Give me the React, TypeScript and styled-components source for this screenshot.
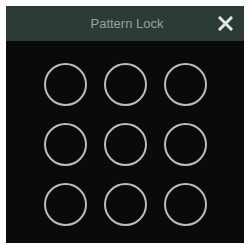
import React from "react";
import styled, { createGlobalStyle } from "styled-components";

const Global = createGlobalStyle`
  html, body { margin: 0; padding: 0; background: #ffffff; }
  body { font-family: "Liberation Sans", Arial, sans-serif; }
`;

const Page = styled.div`
  padding: 6px 4px 3px 6px;
`;

const Panel = styled.div`
  width: 238px;
  height: 237px;
  background: #0a0a0a;
  display: flex;
  flex-direction: column;
`;

const Header = styled.div`
  position: relative;
  height: 35px;
  background: #2d3b36;
  display: flex;
  align-items: center;
  justify-content: center;
`;

const Title = styled.span`
  color: #97a29d;
  font-size: 13px;
  margin-left: 4px;
`;

const Close = styled.button`
  position: absolute;
  right: 11px;
  top: 9px;
  width: 16px;
  height: 16px;
  padding: 0;
  border: none;
  background: transparent;
  display: flex;
  align-items: center;
  justify-content: center;
`;

const Grid = styled.div`
  flex: 1;
  display: grid;
  grid-template-columns: repeat(3, 43px);
  grid-auto-rows: 43px;
  gap: 17px;
  justify-content: center;
  padding-top: 22px;
`;

const Dot = styled.div`
  box-sizing: border-box;
  width: 43px;
  height: 43px;
  border-radius: 50%;
  border: 2px solid #bdbdbd;
`;

export default function App() {
  return (
    <>
      <Global />
      <Page>
        <Panel>
          <Header>
            <Title>Pattern Lock</Title>
            <Close aria-label="close">
              <svg width="15" height="15" viewBox="0 0 15 15">
                <path d="M2 2 L13 13 M13 2 L2 13" stroke="#e4e6e5" strokeWidth="3" strokeLinecap="square" />
              </svg>
            </Close>
          </Header>
          <Grid>
            {Array.from({ length: 9 }).map((_, i) => (
              <Dot key={i} />
            ))}
          </Grid>
        </Panel>
      </Page>
    </>
  );
}
